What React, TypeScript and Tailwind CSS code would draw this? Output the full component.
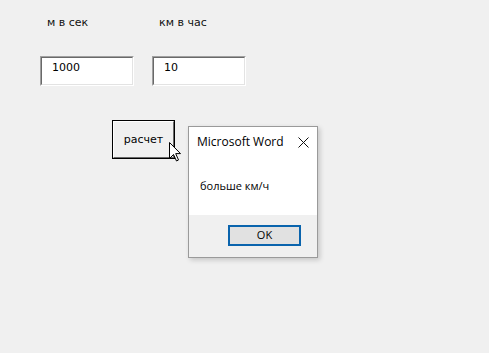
const labelFont = { fontFamily: "Tahoma, 'DejaVu Sans', sans-serif" };

const Field = ({ label, value }: { label: string; value: string }) => (
  <div className="flex flex-col w-[94px]">
    <div className="h-[14px] pl-[7px] text-[11px] leading-[14px] text-[#111]">{label}</div>
    <div className="mt-[26px] h-[30px] border border-t-[#a0a0a0] border-l-[#a0a0a0] border-r-white border-b-white">
      <div className="h-full border border-t-[#696969] border-l-[#696969] border-r-[#e3e3e3] border-b-[#e3e3e3] bg-white pl-[10px] pt-[3px] text-[11px] leading-[14px] text-black">
        {value}
      </div>
    </div>
  </div>
);

const Cursor = () => (
  <svg width="13" height="20" viewBox="0 0 13 20" className="absolute left-[169px] top-[142px]">
    <path
      d="M0.5 0.5 L0.5 16.5 L4.5 12.5 L7.5 19 L9.5 18 L6.7 11.6 L11.5 11.6 Z"
      fill="#fff"
      stroke="#000"
      strokeWidth="1"
      strokeLinejoin="miter"
    />
  </svg>
);

export default function App() {
  return (
    <div
      className="relative w-[489px] h-[353px] bg-[#f0f0f0] overflow-hidden"
      style={labelFont}
    >
      <div className="flex gap-[18px] pl-[40px] pt-[16px]">
        <Field label="м в сек" value="1000" />
        <Field label="км в час" value="10" />
      </div>

      <div className="ml-[112px] mt-[34px] w-[63px] h-[39px] border border-black">
        <div className="h-full flex items-center justify-center border border-t-white border-l-white border-r-[#696969] border-b-[#696969] bg-[#f0f0f0] text-[11px] text-black">
          <span className="mt-[1px]">расчет</span>
        </div>
      </div>

      <Cursor />

      {/* message box */}
      <div
        className="absolute left-[188px] top-[126px] w-[130px] h-[132px] flex flex-col border border-[#9a9a9a] bg-white shadow-[2px_2px_5px_rgba(0,0,0,0.18)]"
        style={{ fontFamily: "'Segoe UI', 'Open Sans', 'Liberation Sans', sans-serif" }}
      >
        <div className="flex items-center justify-between h-[30px] pl-[8px] pr-[8px]">
          <span className="text-[12px] text-black">Microsoft Word</span>
          <svg width="11" height="11" viewBox="0 0 11 11">
            <path d="M0.5 0.5 L10.5 10.5 M10.5 0.5 L0.5 10.5" stroke="#111" strokeWidth="1" />
          </svg>
        </div>
        <div className="flex-1 pl-[11px] pt-[21px] text-[11px] text-black">
          больше км/ч
        </div>
        <div className="h-[42px] bg-[#f0f0f0] flex justify-end pr-[16px] pt-[10px]">
          <div className="w-[73px] h-[21px] border-2 border-[#0a64ad] bg-[#e1e1e1] flex items-center justify-center text-[11px] text-black">
            OK
          </div>
        </div>
      </div>
    </div>
  );
}
